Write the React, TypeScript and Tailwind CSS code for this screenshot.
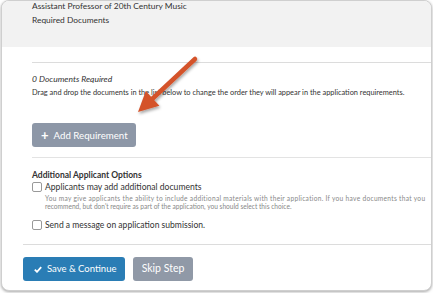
import React from "react";

export default function App() {
  return (
    <div className="relative w-[433px] h-[293px] bg-white overflow-hidden" style={{ fontFamily: "Lato, 'Open Sans', sans-serif" }}>
      <div className="ml-[1px] w-[431px] h-[291px] border border-[#cfcfcf] rounded-[8px] shadow-[0_1px_3px_rgba(0,0,0,0.35)] overflow-hidden bg-white">
        <div className="h-[46px] bg-[#f2f2f2] pl-[30px] text-[#333] text-[8.4px]">
          <div className="h-[10px] leading-[10px]">Assistant Professor of 20th Century Music</div>
          <div className="mt-[4px] h-[10px] leading-[10px]">Required Documents</div>
        </div>
        <div className="ml-[30px] mt-[15px] border-t border-[#dcdcdc]">
          <div className="mt-[10px] h-[12px] text-[8.5px] leading-[12px] italic text-[#333]">0 Documents Required</div>
          <div className="mt-[3px] h-[10px] text-[7.4px] leading-[10px] text-[#333] whitespace-nowrap">
            Drag and drop the documents in the list below to change the order they will appear in the application requirements.
          </div>
          <div className="mt-[25px] w-[104px] h-[24px] rounded-[3px] bg-[#8d97a7] flex items-center pl-[9px] text-white text-[9.7px]">
            <span className="text-[13px] leading-none mr-[5px] font-bold">+</span>
            <span>Add Requirement</span>
          </div>
          <div className="mt-[10px] h-0 border-t border-[#e3e3e3]" />
          <div className="mt-[11px] h-[12px] text-[8.5px] leading-[12px] font-bold text-[#333]">Additional Applicant Options</div>
          <div className="flex items-center h-[12px]">
            <div className="w-[10px] h-[10px] border border-[#999] rounded-[2px] bg-white" />
            <span className="ml-[3px] text-[8.6px] leading-[12px] text-[#333]">Applicants may add additional documents</span>
          </div>
          <div className="ml-[13px] mt-[1px] text-[6.6px] leading-[8px] text-[#888] whitespace-nowrap">
            <div className="h-[8px] tracking-[0.3px]">You may give applicants the ability to include additional materials with their application. If you have documents that you</div>
            <div className="h-[8px]">recommend, but don't require as part of the application, you should select this choice.</div>
          </div>
          <div className="mt-[9px] flex items-center h-[12px]">
            <div className="w-[10px] h-[10px] border border-[#999] rounded-[2px] bg-white" />
            <span className="ml-[3px] text-[8.55px] leading-[12px] text-[#333]">Send a message on application submission.</span>
          </div>
        </div>
        <div className="ml-[21px] mt-[13px] border-t border-[#dcdcdc]">
          <div className="mt-[12px] flex gap-[8px]">
            <div className="w-[102px] h-[24px] rounded-[3px] bg-[#2a7db5] flex items-center pl-[11px] text-white text-[9.5px]">
              <svg width="8" height="7" viewBox="0 0 8 7" className="mr-[5px]">
                <path d="M0.8 3.6 L3 5.8 L7.2 1.2" stroke="white" strokeWidth="1.8" fill="none" />
              </svg>
              <span>Save &amp; Continue</span>
            </div>
            <div className="w-[60px] h-[24px] rounded-[3px] bg-[#9099a7] flex items-center justify-center text-white text-[10.5px]">
              Skip Step
            </div>
          </div>
        </div>
      </div>
      <svg className="absolute left-0 top-0" width="433" height="293" viewBox="0 0 433 293">
        <defs>
          <filter id="sh" x="-20%" y="-20%" width="140%" height="140%">
            <feDropShadow dx="1" dy="2" stdDeviation="1.5" floodColor="#000" floodOpacity="0.35" />
          </filter>
        </defs>
        <g filter="url(#sh)">
          <line x1="195" y1="59" x2="150" y2="101" stroke="#d4532b" strokeWidth="4.5" strokeLinecap="round" />
          <polygon points="138,112 145.8,91.1 159.4,105.7" fill="#d4532b" />
        </g>
      </svg>
    </div>
  );
}
